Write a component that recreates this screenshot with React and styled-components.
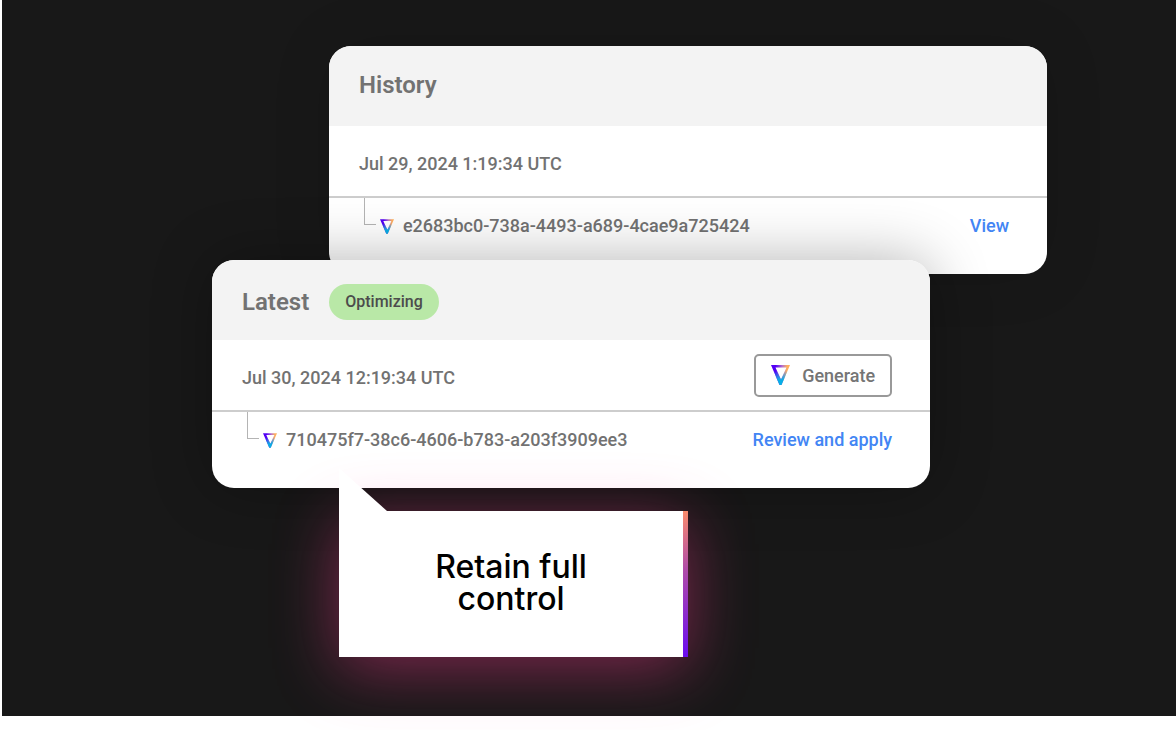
import React from "react";
import styled, { createGlobalStyle } from "styled-components";

const GlobalStyle = createGlobalStyle`
  *, *::before, *::after { box-sizing: border-box; }
  body {
    margin: 0;
    background: #ffffff;
    font-family: Roboto, "Liberation Sans", sans-serif;
    color: #727272;
  }
  h2, p { margin: 0; }
`;

const Stage = styled.main`
  margin: 0 0 14px 2px;
  min-height: calc(100vh - 14px);
  padding: 46px 129px 59px 210px;
  background: #181818;
`;

const Stack = styled.div`
  display: flex;
  flex-direction: column;
`;

const Card = styled.section`
  width: 86%;
  align-self: ${(p) => (p.$front ? "flex-start" : "flex-end")};
  margin-top: ${(p) => (p.$front ? "-14px" : "0")};
  position: relative;
  overflow: hidden;
  border-radius: 22px;
  background: #ffffff;
  box-shadow: 0 0 60px rgba(0, 0, 0, ${(p) => (p.$front ? 0.3 : 0.12)});
`;

const CardHeader = styled.header`
  display: flex;
  align-items: center;
  gap: 20px;
  height: 80px;
  padding: ${(p) => (p.$front ? "4px 30px 0" : "0 30px 2px")};
  background: #f3f3f3;
`;

const Title = styled.h2`
  font-size: 24px;
  line-height: 32px;
  font-weight: 600;
`;

const Badge = styled.span`
  padding: 0 16px;
  border-radius: 18px;
  background: #b9e8a7;
  color: #4c4c4c;
  font-size: 16px;
  line-height: 36px;
  font-weight: 500;
`;

const DateRow = styled.div`
  display: flex;
  align-items: center;
  justify-content: space-between;
  height: 72px;
  padding: 0 38px 0 30px;
  border-bottom: 2px solid #cdcdcd;
`;

const DateText = styled.p`
  font-size: 18px;
  line-height: 24px;
  padding-top: 6px;
  font-weight: 500;
`;

const RunRow = styled.div`
  display: flex;
  align-items: center;
  height: 76px;
  padding: 0 38px 20px 35px;
`;

const Elbow = styled.span`
  align-self: flex-start;
  width: 12px;
  height: 27px;
  margin-right: 4px;
  border-left: 1px solid #b4b4b4;
  border-bottom: 1px solid #b4b4b4;
`;

const RunId = styled.span`
  flex: 1;
  margin-left: 9px;
  font-size: 18px;
  line-height: 24px;
  font-weight: 500;
`;

const ActionLink = styled.a`
  color: #4285f4;
  font-size: 18px;
  line-height: 24px;
  font-weight: 500;
  text-decoration: none;
`;

const GenerateButton = styled.button`
  display: flex;
  align-items: center;
  gap: 12px;
  height: 43px;
  padding: 0 15px;
  border: 2px solid #999999;
  border-radius: 5px;
  background: #ffffff;
  color: #757575;
  font-family: inherit;
  font-size: 18px;
  font-weight: 500;
`;

const Mark = styled.svg`
  display: block;
  flex: none;
  width: ${(p) => (p.$large ? "19px" : "14px")};
  height: ${(p) => (p.$large ? "20px" : "15px")};
`;

const Callout = styled.aside`
  position: relative;
  display: flex;
  width: 100%;
  max-width: 349px;
  margin: 23px 0 0 127px;
  background: #ffffff;
  box-shadow: 0 12px 64px rgba(255, 60, 145, 0.44);
  color: #000000;

  &::before {
    content: "";
    position: absolute;
    left: 0;
    bottom: 100%;
    width: 48px;
    height: 43px;
    background: #ffffff;
    clip-path: polygon(0 0, 100% 100%, 0 100%);
  }
`;

const CalloutText = styled.p`
  flex: 1;
  padding: 40px 80px 42px;
  font-family: Inter, "Liberation Sans", sans-serif;
  font-size: 32px;
  line-height: 32px;
  font-weight: 500;
  text-align: center;
`;

const Accent = styled.span`
  width: 5px;
  background: linear-gradient(#f98b6c, #b04ba8 40%, #6a0df0);
`;

function Logo({ id, large }) {
  return (
    <Mark viewBox="0 0 19 20" $large={large} aria-hidden="true">
      <defs>
        <linearGradient id={`${id}-across`} x1="0" x2="1" y1="0" y2="0">
          <stop offset="0.25" stopColor="#5200f5" />
          <stop offset="0.6" stopColor="#b873c8" />
          <stop offset="0.85" stopColor="#ffb05c" />
        </linearGradient>
        <linearGradient id={`${id}-down`} x1="0" x2="0" y1="0" y2="1">
          <stop offset="0.3" stopColor="#08aee6" stopOpacity="0" />
          <stop offset="0.75" stopColor="#08aee6" />
        </linearGradient>
      </defs>
      {["across", "down"].map((part) => (
        <path
          key={part}
          fill={`url(#${id}-${part})`}
          fillRule="evenodd"
          d="M0 0H19L10.500 20H8.500ZM4.500 2.500L10 14.500L15.500 2.500Z"
        />
      ))}
    </Mark>
  );
}

export default function App() {
  return (
    <>
      <GlobalStyle />
      <Stage>
        <Stack>
          <Card>
            <CardHeader>
              <Title>History</Title>
            </CardHeader>
            <DateRow>
              <DateText>Jul 29, 2024 1:19:34 UTC</DateText>
            </DateRow>
            <RunRow>
              <Elbow />
              <Logo id="history" />
              <RunId>e2683bc0-738a-4493-a689-4cae9a725424</RunId>
              <ActionLink href="#view">View</ActionLink>
            </RunRow>
          </Card>
          <Card $front>
            <CardHeader $front>
              <Title>Latest</Title>
              <Badge>Optimizing</Badge>
            </CardHeader>
            <DateRow>
              <DateText>Jul 30, 2024 12:19:34 UTC</DateText>
              <GenerateButton type="button">
                <Logo id="generate" large />
                Generate
              </GenerateButton>
            </DateRow>
            <RunRow>
              <Elbow />
              <Logo id="latest" />
              <RunId>710475f7-38c6-4606-b783-a203f3909ee3</RunId>
              <ActionLink href="#review">Review and apply</ActionLink>
            </RunRow>
          </Card>
          <Callout>
            <CalloutText>Retain full control</CalloutText>
            <Accent />
          </Callout>
        </Stack>
      </Stage>
    </>
  );
}
